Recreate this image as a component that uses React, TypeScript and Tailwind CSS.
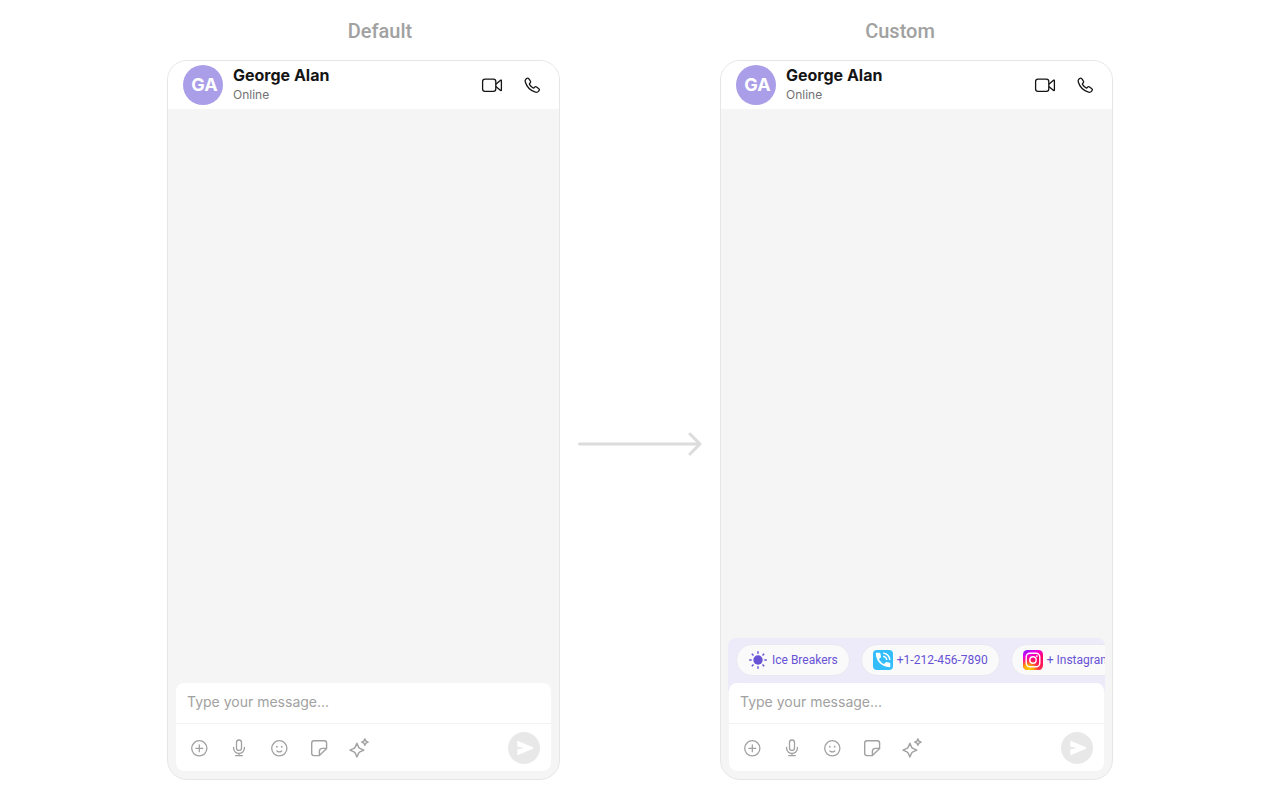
import React, { useId, useState } from 'react';

interface Suggestion {
  label: string;
  icon: React.ReactNode;
}

interface ChatPhoneProps {
  name: string;
  initials: string;
  status: string;
  suggestions?: Suggestion[];
}

const VideoIcon = () => (
  <svg className="h-6 w-6" viewBox="0 0 24 24" fill="none" stroke="currentColor" strokeWidth={1.3} strokeLinejoin="round">
    <rect x="2.6" y="6.2" width="13.2" height="12.2" rx="2.4" />
    <path d="M15.8 11.2 20.6 7.2Q21.4 6.8 21.4 7.7V16.9Q21.4 17.8 20.6 17.4L15.8 13.4" />
  </svg>
);

const PhoneIcon = () => (
  <svg className="h-6 w-6" viewBox="0 0 24 24" fill="none" stroke="currentColor" strokeWidth={1.3} strokeLinejoin="round">
    <path d="M6 6.1 6.7 5.5C7.4 5 8.2 5.1 8.7 5.7L10.3 7.9C10.8 8.5 10.7 9.3 10.2 9.8L9.6 10.5C9.3 10.9 9.3 11.3 9.6 11.7C10.4 13 11.5 14 12.8 14.8C13.2 15.1 13.6 15 14 14.8L14.7 14.1C15.3 13.6 16 13.6 16.6 14L18.8 15.7C19.5 16.2 19.6 17 19 17.6L18.4 18.4C17.6 19.3 16.6 19.5 15.5 19.2C10.7 17.7 6.8 13.9 5.3 9C4.9 7.9 5.1 6.9 6 6.1Z" />
  </svg>
);

const PlusIcon = () => (
  <svg className="h-6 w-6" viewBox="0 0 24 24" fill="none" stroke="currentColor" strokeWidth={1.3} strokeLinecap="round">
    <circle cx="12.3" cy="12.3" r="7.6" />
    <path d="M12.3 8.9V15.7M8.9 12.3H15.7" />
  </svg>
);

const MicIcon = () => (
  <svg className="h-6 w-6" viewBox="0 0 24 24" fill="none" stroke="currentColor" strokeWidth={1.3} strokeLinecap="round">
    <rect x="9.5" y="4" width="5" height="10.4" rx="2.5" />
    <path d="M6.6 11.4V12.3A5.4 5.1 0 0 0 17.4 12.3V11.4M12 17.4V19.7M8.6 19.7H15.4" />
  </svg>
);

const SmileIcon = () => (
  <svg className="h-6 w-6" viewBox="0 0 24 24" fill="none" stroke="currentColor" strokeWidth={1.3} strokeLinecap="round">
    <circle cx="12.3" cy="12.3" r="7.6" />
    <path d="M9.9 14.9Q12.3 16.9 14.7 14.9" />
    <circle cx="9.9" cy="10.7" r="0.9" fill="currentColor" stroke="none" />
    <circle cx="14.7" cy="10.7" r="0.9" fill="currentColor" stroke="none" />
  </svg>
);

const StickerIcon = () => (
  <svg className="h-6 w-6" viewBox="0 0 24 24" fill="none" stroke="currentColor" strokeWidth={1.4} strokeLinejoin="round">
    <path d="M12.4 19.6H7C5.6 19.6 4.7 18.7 4.7 17.3V7C4.7 5.6 5.6 4.7 7 4.7H17.3C18.7 4.7 19.6 5.6 19.6 7V12.4L12.4 19.6Z" />
    <path d="M12.4 19.6V15.4C12.4 13.6 13.6 12.4 15.4 12.4H19.6" />
  </svg>
);

const SparkleIcon = () => (
  <svg className="h-6 w-6" viewBox="0 0 24 24" fill="none" stroke="currentColor" strokeWidth={1.4} strokeLinejoin="round">
    <path d="M9.9 7.2 11.6 11.1Q12 12 12.9 12.4L16.8 14.1 12.9 15.8Q12 16.2 11.6 17.1L9.9 21 8.2 17.1Q7.8 16.2 6.9 15.8L3 14.1 6.9 12.4Q7.8 12 8.2 11.1Z" />
    <path d="M17.9 2.9 18.9 5.1 21.1 6.1 18.9 7.1 17.9 9.3 16.9 7.1 14.7 6.1 16.9 5.1Z" />
  </svg>
);

const SendIcon = () => (
  <svg className="h-8 w-8" viewBox="0 0 32 32" fill="currentColor">
    <path d="M10.2 8.9 24.9 15.3Q26.2 16 24.9 16.7L10.2 23.1Q9.3 23.4 9.3 22.5V17.6L16 16 9.3 14.4V9.5Q9.3 8.6 10.2 8.9Z" />
  </svg>
);

const SunIcon = () => (
  <svg className="h-5 w-5 shrink-0" viewBox="0 0 20 20" fill="none" stroke="currentColor" strokeWidth={1.5}>
    <circle cx="10" cy="10" r="4.7" fill="currentColor" stroke="none" />
    <path d="M10 1.2V3.7M10 16.3V18.8M1.2 10H3.7M16.3 10H18.8M3.8 3.8 5.5 5.5M14.5 14.5 16.2 16.2M3.8 16.2 5.5 14.5M14.5 5.5 16.2 3.8" />
  </svg>
);

const CallIcon = () => (
  <svg className="h-5 w-5 shrink-0" viewBox="0 0 20 20" fill="none">
    <rect width="20" height="20" rx="4" fill="#33bdfd" />
    <path
      fill="#fff"
      d="M3.6 2.8H6.6Q7.3 2.8 7.4 3.5L8 6.6Q8.1 7.1 7.7 7.5L6 9.2C7.1 11.3 8.8 13 10.9 14.1L12.6 12.4Q13 12 13.5 12.1L16.6 12.7Q17.3 12.8 17.3 13.5V16.5Q17.3 17.3 16.5 17.3C8.8 17.1 2.9 11.3 2.8 3.6Q2.8 2.8 3.6 2.8Z"
    />
    <path d="M10.2 3.3A6.6 6.6 0 0 1 16.8 9.9M10.2 6.4A3.5 3.5 0 0 1 13.7 9.9" stroke="#fff" strokeWidth={1.5} />
  </svg>
);

const InstagramIcon = () => {
  const id = useId();
  return (
    <svg className="h-5 w-5 shrink-0" viewBox="0 0 20 20" fill="none">
      <defs>
        <linearGradient id={`${id}-base`} x1="3" y1="0" x2="13" y2="20" gradientUnits="userSpaceOnUse">
          <stop offset="0" stopColor="#8a16ff" />
          <stop offset="0.25" stopColor="#f000e0" />
          <stop offset="0.6" stopColor="#ff0069" />
          <stop offset="1" stopColor="#ff2a4f" />
        </linearGradient>
        <radialGradient id={`${id}-glow`} cx="5" cy="21" r="15" gradientUnits="userSpaceOnUse">
          <stop offset="0" stopColor="#ffd600" />
          <stop offset="0.4" stopColor="#ffa800" />
          <stop offset="1" stopColor="#ff0069" stopOpacity="0" />
        </radialGradient>
      </defs>
      <rect width="20" height="20" rx="4.5" fill={`url(#${id}-base)`} />
      <rect width="20" height="20" rx="4.5" fill={`url(#${id}-glow)`} />
      <rect x="3.2" y="3.2" width="13.6" height="13.6" rx="3.8" stroke="#fff" strokeWidth={1.4} />
      <circle cx="10" cy="10" r="3.2" stroke="#fff" strokeWidth={1.4} />
      <circle cx="13.9" cy="6.1" r="0.9" fill="#fff" />
    </svg>
  );
};

const tools = [
  { label: 'Add attachment', icon: <PlusIcon /> },
  { label: 'Record voice message', icon: <MicIcon /> },
  { label: 'Insert emoji', icon: <SmileIcon /> },
  { label: 'Insert sticker', icon: <StickerIcon /> },
  { label: 'AI assistant', icon: <SparkleIcon /> },
];

const suggestions: Suggestion[] = [
  { label: 'Ice Breakers', icon: <SunIcon /> },
  { label: '+1-212-456-7890', icon: <CallIcon /> },
  { label: '+ Instagram', icon: <InstagramIcon /> },
];

const ChatPhone: React.FC<ChatPhoneProps> = ({ name, initials, status, suggestions }) => {
  const [message, setMessage] = useState('');

  return (
    <section className="flex min-w-0 flex-1 flex-col overflow-hidden rounded-[20px] border border-[#e6e6e6] bg-[#f5f5f5] font-[Inter,sans-serif]">
      <header className="flex h-12 items-center bg-white px-[15px]">
        <div className="flex h-10 w-10 shrink-0 items-center justify-center rounded-full bg-[#aa9ee8] pl-[3px] text-lg font-bold text-white">
          {initials}
        </div>
        <div className="ml-2.5 min-w-0 flex-1">
          <h2 className="text-base leading-5 font-bold text-[#141414]">{name}</h2>
          <p className="text-xs leading-5 text-[#727272]">{status}</p>
        </div>
        <div className="flex gap-4 text-[#141414]">
          <button type="button" aria-label="Start video call">
            <VideoIcon />
          </button>
          <button type="button" aria-label="Start voice call">
            <PhoneIcon />
          </button>
        </div>
      </header>

      <div className="flex-1" />

      <div className="px-2 pb-2">
        {suggestions && (
          // The strip runs on under the composer so its rounded corners sit on the tint
          <div className="-mx-px flex gap-[11px] overflow-hidden rounded-t-lg bg-[#edeafa] px-2 pt-[6px] pb-[15px] font-[Roboto,sans-serif]">
            {suggestions.map(s => (
              <button
                key={s.label}
                type="button"
                className="flex h-8 shrink-0 items-center gap-1 rounded-full border border-[#e8e8f0] bg-[#fafafa] px-[11px] text-xs whitespace-nowrap text-[#6852d6]"
              >
                {s.icon}
                {s.label}
              </button>
            ))}
          </div>
        )}
        <form
          className={suggestions ? 'relative -mt-2 rounded-lg bg-white' : 'rounded-lg bg-white'}
          onSubmit={e => {
            e.preventDefault();
            setMessage('');
          }}
        >
          <input
            type="text"
            aria-label="Message"
            value={message}
            onChange={e => setMessage(e.target.value)}
            placeholder="Type your message..."
            className="block h-10 w-full px-[11px] pb-1 text-sm text-[#141414] outline-none placeholder:text-[#a1a1a1]"
          />
          <div className="flex h-12 items-center justify-between border-t border-[#f2f2f2] px-[11px] text-[#a1a1a1]">
            <div className="flex gap-4">
              {tools.map(t => (
                <button key={t.label} type="button" aria-label={t.label}>
                  {t.icon}
                </button>
              ))}
            </div>
            <button type="submit" aria-label="Send message" className="rounded-full bg-[#e8e8e8] text-white">
              <SendIcon />
            </button>
          </div>
        </form>
      </div>
    </section>
  );
};

const App: React.FC = () => {
  return (
    <main className="flex min-h-screen flex-col bg-white pb-5">
      <div className="mx-auto grid w-full max-w-[1040px] grid-cols-2 pt-[17px] pb-[15px] text-center font-[Roboto,sans-serif] text-xl leading-7 font-medium text-[#a1a1a1]">
        <h1>Default</h1>
        <h1>Custom</h1>
      </div>
      <div className="mx-auto flex w-full max-w-[946px] flex-1">
        <ChatPhone name="George Alan" initials="GA" status="Online" />
        <div className="flex w-40 shrink-0 items-center justify-center pt-12">
          <svg className="h-6 w-32" viewBox="0 0 128 24" fill="none" stroke="#dcdcdc" strokeWidth={3} strokeLinecap="round" strokeLinejoin="round">
            <path d="M3.5 12H124M114 2 124 12 114 22" />
          </svg>
        </div>
        <ChatPhone name="George Alan" initials="GA" status="Online" suggestions={suggestions} />
      </div>
    </main>
  );
};

export default App;
